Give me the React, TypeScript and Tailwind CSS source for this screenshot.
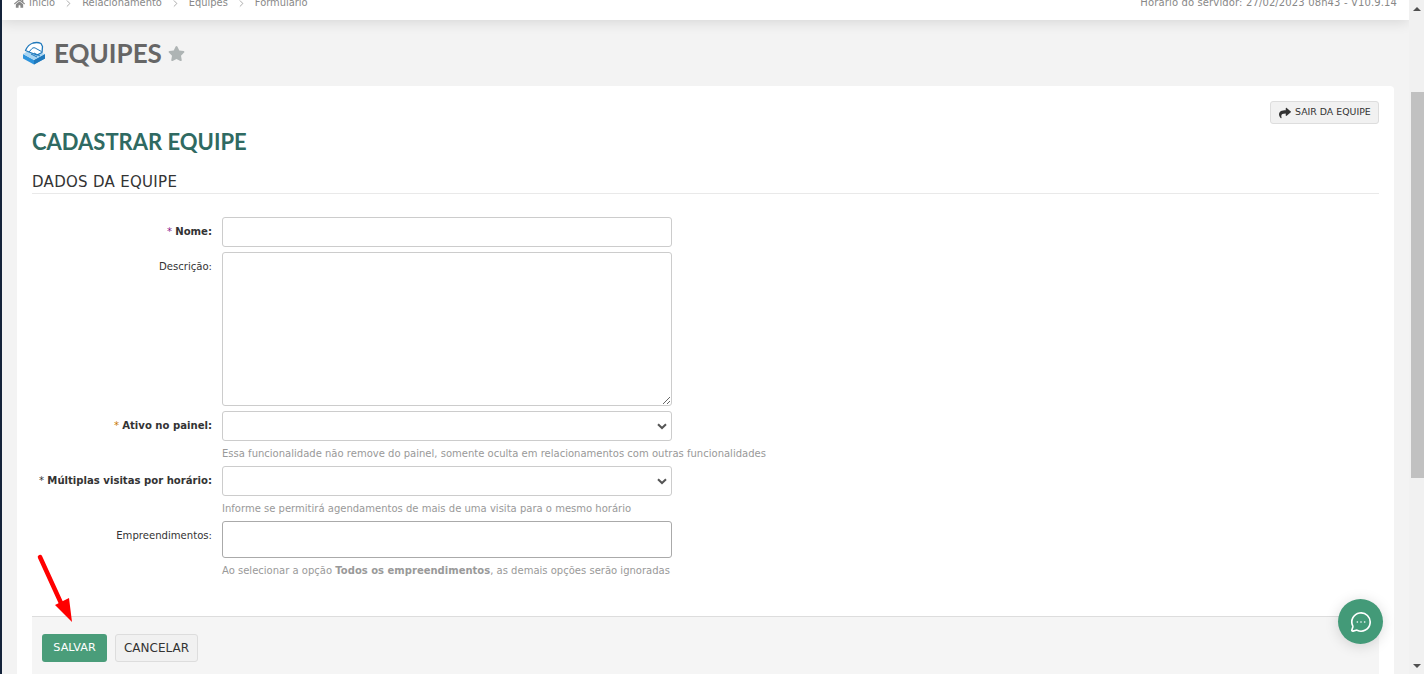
import { ChevronRight, MessageCircleMore } from "lucide-react"
import { FaHome, FaShare, FaStar } from "react-icons/fa"

const crumbs = ["Relacionamento", "Equipes", "Formulário"]

function Field({
  label,
  required,
  star,
  help,
  children,
}: {
  label: string
  required?: boolean
  star?: string
  help?: React.ReactNode
  children: React.ReactNode
}) {
  return (
    <div className="flex mb-[5px]">
      <label className={`w-[190px] shrink-0 text-right whitespace-nowrap pt-[8px] pr-[10px] text-[10.1px] leading-[14px] text-[#333] ${required ? "font-bold" : ""}`}>
        {required && <span className={`${star} font-normal`}>* </span>}
        {label}:
      </label>
      <div className="w-[450px]">
        {children}
        {help && <p className="mt-[6px] mb-[5px] text-[10px] leading-[14px] tracking-[0.01px] text-[#999] whitespace-nowrap">{help}</p>}
      </div>
    </div>
  )
}

function SelectBox() {
  return (
    <div className="relative">
      <select className="block w-full h-[30px] appearance-none bg-white border border-[#ccc] rounded-[3px]"></select>
      <svg className="absolute right-[5px] top-[12px]" width="10" height="7" viewBox="0 0 10 7">
        <path d="M1 1.2 5 5l4-3.8" fill="none" stroke="#555" strokeWidth="2" />
      </svg>
    </div>
  )
}

function EquipeIcon() {
  return (
    <svg width="24" height="24" viewBox="0 0 24 24" className="shrink-0">
      <path d="M1 13v4.5L12 23.5 23 17.5V13L12 19z" fill="#2d93dc" />
      <path d="M12 19v4.5L23 17.5V13z" fill="#1f78bb" />
      <path d="M1 13 8 9l15 4-11 6z" fill="#a9d5f2" />
      <path d="M3.5 9.5C5 6 8 3 11 2c3-.8 6-.5 8 .5l1.5 3-.5 6-5 2.5-8-3z" fill="#fff" stroke="#1f78bb" strokeWidth="1.3" strokeLinejoin="round" />
      <path d="M7 11l3-3.5c1-1 3-1 4 0l5.5 3M9 13l6 3M12 12l6 3" fill="none" stroke="#1f78bb" strokeWidth="1" />
    </svg>
  )
}

export default function App() {
  return (
    <div className="relative w-[1424px] h-[674px] overflow-hidden flex bg-[#f3f3f3] font-['DejaVu_Sans',sans-serif]">
      <div className="w-[2px] bg-[#14233a]"></div>

      <main className="w-[1407px] flex flex-col overflow-hidden">
        {/* Top bar, cut by page scroll */}
        <header className="relative z-10 h-[20px] shrink-0 bg-white shadow-[0_2px_14px_rgba(0,0,0,0.12)] overflow-hidden flex justify-between pl-[12px] pr-[12px] text-[10px] leading-[14px] text-[#888]">
          <div className="flex items-start -mt-[4px] gap-[8px] text-[9.9px]">
            <span className="flex items-center gap-[4px]">
              <FaHome className="w-[11px] h-[11px]" />
              Início
            </span>
            {crumbs.map((c) => (
              <span key={c} className="flex items-center gap-[8px]">
                <ChevronRight className="w-[11px] h-[11px]" strokeWidth={1.5} />
                {c}
              </span>
            ))}
          </div>
          <div className="-mt-[4px] tracking-[0.13px]">Horário do servidor: 27/02/2023 08h43 - V10.9.14</div>
        </header>

        <div className="flex items-center shrink-0 h-[66px] pl-[20px] gap-[8px]">
          <EquipeIcon />
          <h1 className="font-['Lato',sans-serif] font-bold text-[26px] text-[#666]">EQUIPES</h1>
          <FaStar className="w-[17px] h-[17px] -ml-[2px] text-[#aeb4b4]" />
        </div>

        <section className="ml-[15px] mr-[15px] shrink-0 h-[600px] bg-white rounded-t-[4px] px-[15px] pt-[15px]">
          <div className="flex justify-end h-[23px]">
            <button className="flex items-center gap-[4px] h-[23px] w-[109px] pl-[8px] bg-[#f1f1f1] border border-[#dddddd] rounded-[3px] text-[9.4px] whitespace-nowrap text-[#333]">
              <FaShare className="w-[12px] h-[12px]" />
              SAIR DA EQUIPE
            </button>
          </div>

          <h2 className="font-['Lato',sans-serif] font-bold text-[22px] leading-[30px] text-[#2f6a62] mt-[3px]">CADASTRAR EQUIPE</h2>
          <h3 className="mt-[15px] pb-[1px] border-b border-[#e9e9e9] text-[15px] leading-[20px] tracking-[0.3px] text-[#333]">DADOS DA EQUIPE</h3>

          <form className="mt-[23px]">
            <Field label="Nome" required star="text-[#8b1a8b]">
              <input className="block w-full h-[30px] bg-white border border-[#ccc] rounded-[3px]" />
            </Field>
            <Field label="Descrição">
              <textarea className="block w-full h-[154px] bg-white border border-[#ccc] rounded-[3px]" />
            </Field>
            <Field
              label="Ativo no painel"
              required
              star="text-[#c77700]"
              help="Essa funcionalidade não remove do painel, somente oculta em relacionamentos com outras funcionalidades"
            >
              <SelectBox />
            </Field>
            <div className="-mt-[5px]">
              <Field
                label="Múltiplas visitas por horário"
                required
                star="text-[#333]"
                help="Informe se permitirá agendamentos de mais de uma visita para o mesmo horário"
              >
                <SelectBox />
              </Field>
            </div>
            <div className="-mt-[5px]">
              <Field
                label="Empreendimentos"
                help={
                  <>
                    Ao selecionar a opção <b>Todos os empreendimentos</b>, as demais opções serão ignoradas
                  </>
                }
              >
                <div className="h-[37px] bg-white border border-[#aaa] rounded-[3px]"></div>
              </Field>
            </div>
          </form>

          <div className="mt-[33px] h-[70px] bg-[#f5f5f5] border-t border-[#ddd] pt-[17px] pl-[10px] flex items-start gap-[8px]">
            <button className="h-[28px] w-[65px] bg-[#4a9d7a] rounded-[3px] text-[11.2px] text-white">SALVAR</button>
            <button className="h-[28px] w-[83px] bg-[#f1f1f1] border border-[#ddd] rounded-[3px] text-[12px] text-[#333]">CANCELAR</button>
          </div>
        </section>
      </main>

      {/* Scrollbar */}
      <aside className="relative w-[15px] bg-[#f1f1f1] flex flex-col">
        <div className="h-[92px] flex justify-center pt-[7px]">
          <div className="w-0 h-0 border-x-[4px] border-x-transparent border-b-[4px] border-b-[#505050]"></div>
        </div>
        <div className="ml-[2px] h-[386px] bg-[#c1c1c1]"></div>
        <div className="flex-1 flex justify-center items-end pb-[6px]">
          <div className="w-0 h-0 border-x-[4px] border-x-transparent border-t-[4px] border-t-[#505050]"></div>
        </div>
      </aside>

      {/* Annotation arrow */}
      <svg className="absolute left-[34px] top-[550px]" width="42" height="76" viewBox="0 0 42 76">
        <path d="M6 7 L27 53" stroke="#ff0000" strokeWidth="4.5" strokeLinecap="round" />
        <path d="M38 72 L21 55 L35 48 Z" fill="#ff0000" />
      </svg>

      {/* Chat */}
      <button className="absolute left-[1338px] top-[599px] w-[45px] h-[45px] rounded-full bg-[#439a78] shadow-[0_2px_14px_rgba(0,0,0,0.15)] flex items-center justify-center">
        <MessageCircleMore className="w-[22px] h-[22px] text-white" strokeWidth={1.8} />
      </button>
    </div>
  )
}
